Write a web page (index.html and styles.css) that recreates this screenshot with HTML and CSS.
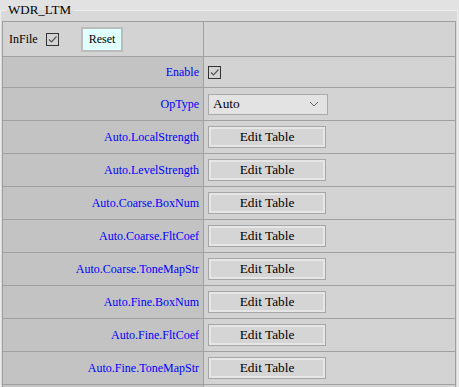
FILE: index.html
```html
<!DOCTYPE html>
<html lang="en">
<head>
    <meta charset="UTF-8">
    <title>WDR_LTM</title>
    <link rel="stylesheet" href="styles.css">
</head>
<body>
    <fieldset class="group">
        <legend>WDR_LTM</legend>
        <table class="params">
            <tr class="head">
                <td>
                    <div class="head-row">
                        <span class="infile">InFile</span>
                        <span class="check"><svg width="11" height="11" viewBox="0 0 11 11"><path d="M2 5.5 L4.5 8 L9.5 2.5" fill="none" stroke="#555" stroke-width="1.2"/></svg></span>
                        <button class="reset">Reset</button>
                    </div>
                </td>
                <td></td>
            </tr>
            <tr class="short">
                <th>Enable</th>
                <td><span class="check"><svg width="11" height="11" viewBox="0 0 11 11"><path d="M2 5.5 L4.5 8 L9.5 2.5" fill="none" stroke="#555" stroke-width="1.2"/></svg></span></td>
            </tr>
            <tr>
                <th>OpType</th>
                <td>
                    <div class="select">
                        <span>Auto</span>
                        <svg width="10" height="6" viewBox="0 0 10 6"><path d="M1 1 L5 5 L9 1" fill="none" stroke="#666" stroke-width="1"/></svg>
                    </div>
                </td>
            </tr>
            <tr><th>Auto.LocalStrength</th><td><button class="edit">Edit Table</button></td></tr>
            <tr><th>Auto.LevelStrength</th><td><button class="edit">Edit Table</button></td></tr>
            <tr><th>Auto.Coarse.BoxNum</th><td><button class="edit">Edit Table</button></td></tr>
            <tr><th>Auto.Coarse.FltCoef</th><td><button class="edit">Edit Table</button></td></tr>
            <tr><th>Auto.Coarse.ToneMapStr</th><td><button class="edit">Edit Table</button></td></tr>
            <tr><th>Auto.Fine.BoxNum</th><td><button class="edit">Edit Table</button></td></tr>
            <tr><th>Auto.Fine.FltCoef</th><td><button class="edit">Edit Table</button></td></tr>
            <tr><th>Auto.Fine.ToneMapStr</th><td><button class="edit">Edit Table</button></td></tr>
            <tr><th></th><td></td></tr>
        </table>
    </fieldset>
</body>
</html>
```

FILE: styles.css
```css
body {
    margin: 0;
    background-color: #e2e2e2;
    font-family: "Liberation Serif", "Times New Roman", serif;
    font-size: 12px;
    color: #000;
}

.group {
    margin: 2px 0 0 0;
    padding: 3px 1px 0 1px;
    border: 1px solid #ececec;
    border-bottom: none;
    background-color: #d9d9d9;
    width: 454px;
}

.group legend {
    margin-left: 4px;
    padding: 0 2px;
    font-size: 13px;
}

.params {
    border-collapse: collapse;
    width: 454px;
}

.params td,
.params th {
    border: 1px solid #a0a0a0;
    padding: 0 4px;
    height: 32px;
    background-color: #d3d3d3;
}

.params th {
    width: 192px;
    font-weight: normal;
    text-align: right;
    color: #0000ff;
    background-color: #c3c3c3;
}

.params .head td {
    height: 34px;
}

.params .short th,
.params .short td {
    height: 30px;
}

.head-row {
    display: flex;
    align-items: center;
    padding-left: 2px;
}

.infile {
    margin-right: 8px;
}

.check {
    display: inline-flex;
    align-items: center;
    justify-content: center;
    width: 11px;
    height: 11px;
    border: 1px solid #333;
    vertical-align: middle;
}

.reset {
    margin-left: 22px;
    padding: 3px 6px;
    font-family: inherit;
    font-size: 12px;
    background-color: #e0ffff;
    border: 2px solid #bcbcbc;
    cursor: pointer;
}

.select {
    display: flex;
    align-items: center;
    justify-content: space-between;
    box-sizing: border-box;
    width: 120px;
    height: 21px;
    padding: 0 8px 0 4px;
    font-size: 13.33px;
    background-color: #e3e3e3;
    border: 1px solid #a9a9a9;
}

.edit {
    display: block;
    box-sizing: border-box;
    width: 118px;
    height: 22px;
    padding: 0;
    font-family: inherit;
    font-size: 13.33px;
    background-color: #d5d5d5;
    border: 1px solid #a6a6a6;
    box-shadow: inset 0 0 0 2px #e6e6e6;
    cursor: pointer;
}
```
